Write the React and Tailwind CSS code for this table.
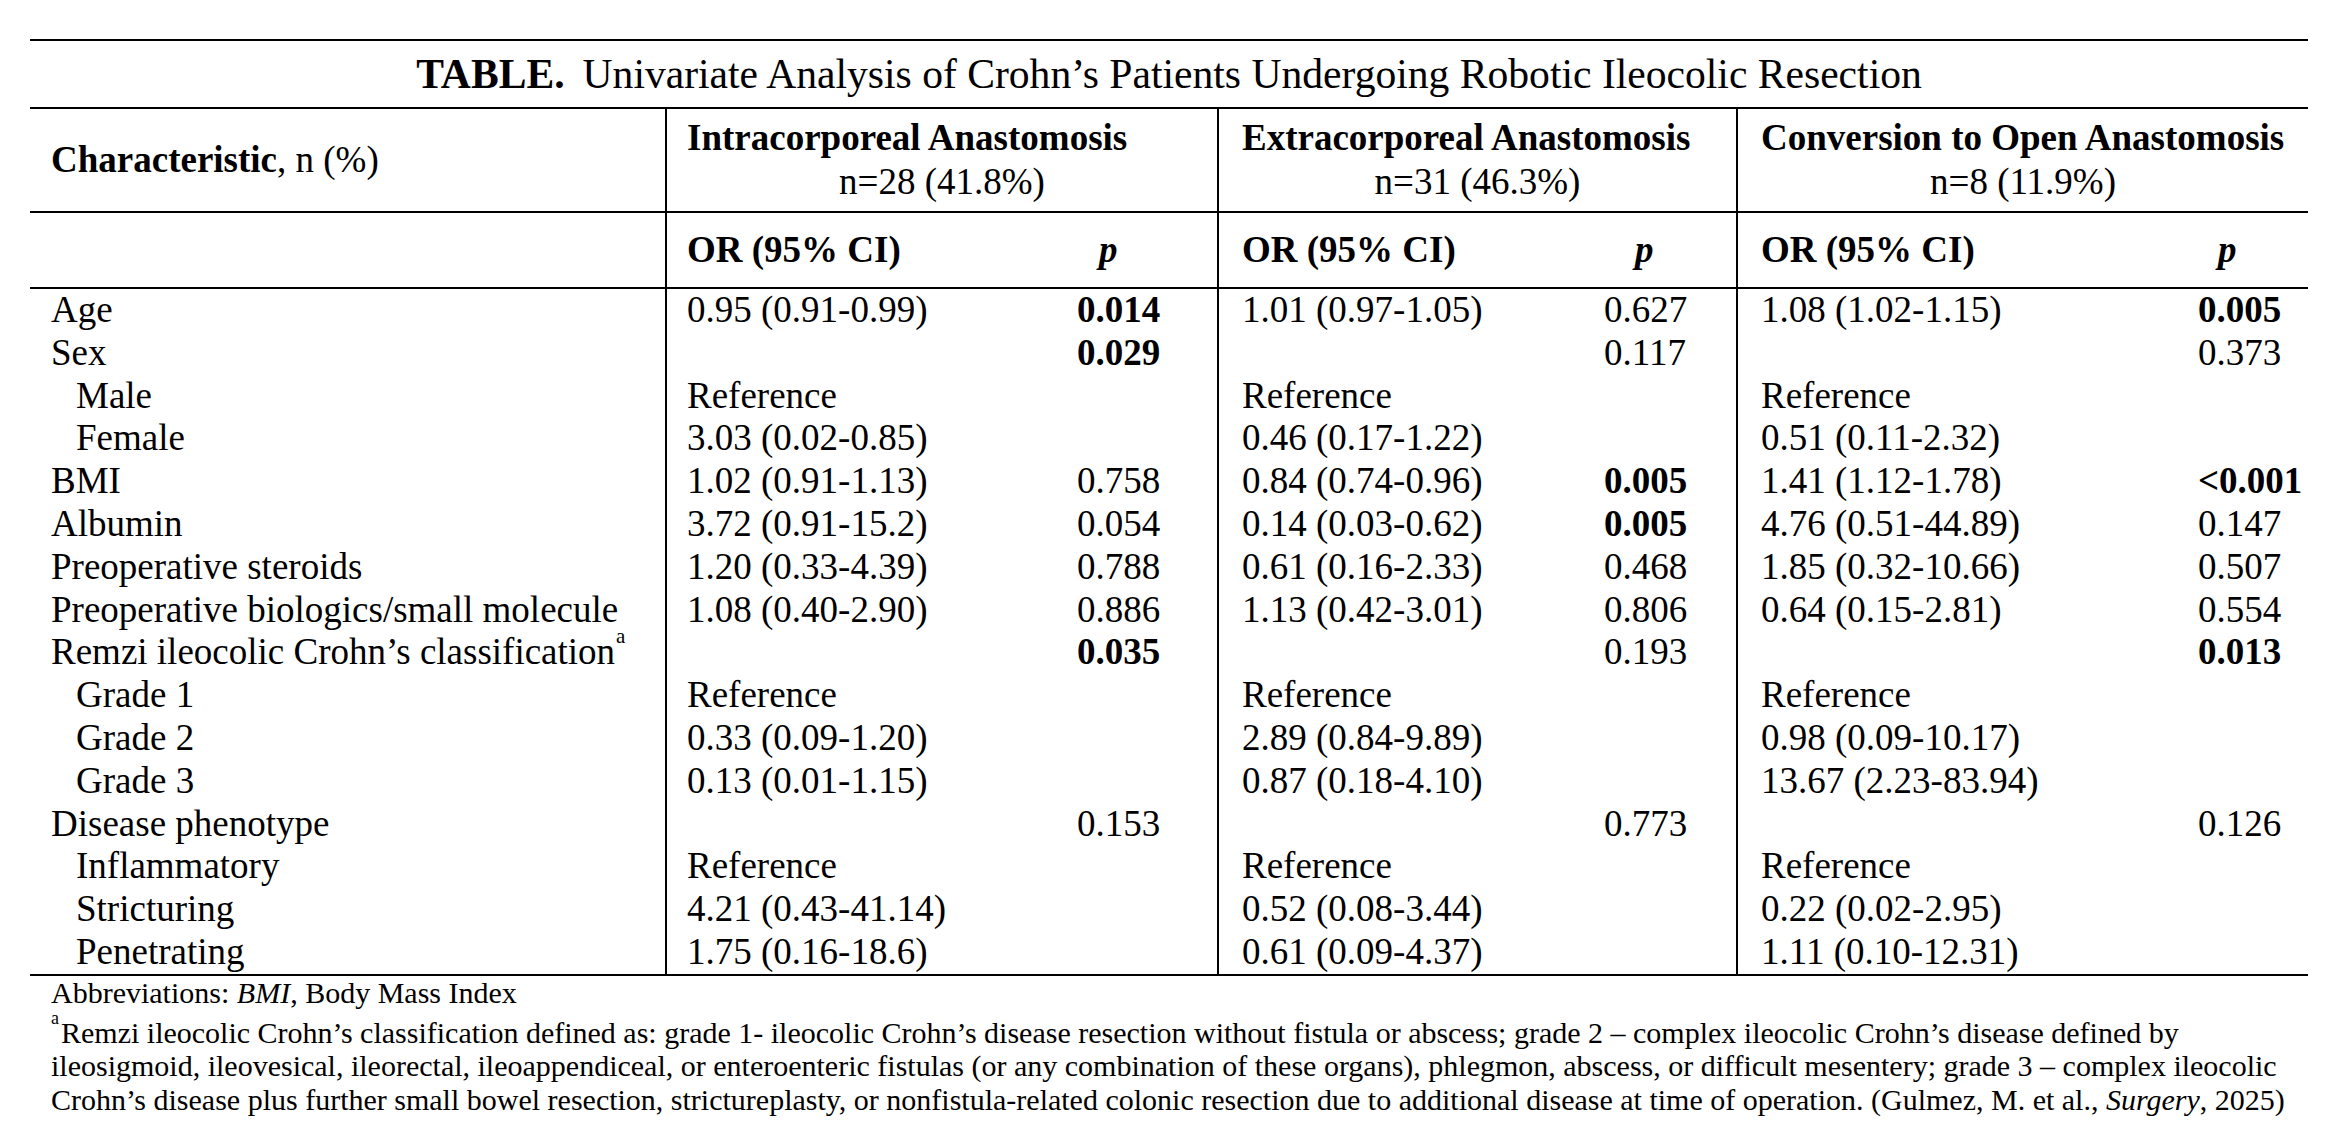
import React from "react";

const rows = [
  { label: "Age", cells: [["0.95 (0.91-0.99)", "0.014", true], ["1.01 (0.97-1.05)", "0.627"], ["1.08 (1.02-1.15)", "0.005", true]] },
  { label: "Sex", cells: [["", "0.029", true], ["", "0.117"], ["", "0.373"]] },
  { label: "Male", sub: true, cells: [["Reference", ""], ["Reference", ""], ["Reference", ""]] },
  { label: "Female", sub: true, cells: [["3.03 (0.02-0.85)", ""], ["0.46 (0.17-1.22)", ""], ["0.51 (0.11-2.32)", ""]] },
  { label: "BMI", cells: [["1.02 (0.91-1.13)", "0.758"], ["0.84 (0.74-0.96)", "0.005", true], ["1.41 (1.12-1.78)", "<0.001", true]] },
  { label: "Albumin", cells: [["3.72 (0.91-15.2)", "0.054"], ["0.14 (0.03-0.62)", "0.005", true], ["4.76 (0.51-44.89)", "0.147"]] },
  { label: "Preoperative steroids", cells: [["1.20 (0.33-4.39)", "0.788"], ["0.61 (0.16-2.33)", "0.468"], ["1.85 (0.32-10.66)", "0.507"]] },
  { label: "Preoperative biologics/small molecule", cells: [["1.08 (0.40-2.90)", "0.886"], ["1.13 (0.42-3.01)", "0.806"], ["0.64 (0.15-2.81)", "0.554"]] },
  { label: "Remzi ileocolic Crohn\u2019s classification", sup: true, cells: [["", "0.035", true], ["", "0.193"], ["", "0.013", true]] },
  { label: "Grade 1", sub: true, cells: [["Reference", ""], ["Reference", ""], ["Reference", ""]] },
  { label: "Grade 2", sub: true, cells: [["0.33 (0.09-1.20)", ""], ["2.89 (0.84-9.89)", ""], ["0.98 (0.09-10.17)", ""]] },
  { label: "Grade 3", sub: true, cells: [["0.13 (0.01-1.15)", ""], ["0.87 (0.18-4.10)", ""], ["13.67 (2.23-83.94)", ""]] },
  { label: "Disease phenotype", cells: [["", "0.153"], ["", "0.773"], ["", "0.126"]] },
  { label: "Inflammatory", sub: true, cells: [["Reference", ""], ["Reference", ""], ["Reference", ""]] },
  { label: "Stricturing", sub: true, cells: [["4.21 (0.43-41.14)", ""], ["0.52 (0.08-3.44)", ""], ["0.22 (0.02-2.95)", ""]] },
  { label: "Penetrating", sub: true, cells: [["1.75 (0.16-18.6)", ""], ["0.61 (0.09-4.37)", ""], ["1.11 (0.10-12.31)", ""]] },
];

const groups = [
  { title: "Intracorporeal Anastomosis", n: "n=28 (41.8%)" },
  { title: "Extracorporeal Anastomosis", n: "n=31 (46.3%)" },
  { title: "Conversion to Open Anastomosis", n: "n=8 (11.9%)" },
];

// left padding of the OR column inside each group
const orPad = ["pl-[20px]", "pl-[23px]", "pl-[23px]"];
const pPad = ["pl-[22px]", "pl-[31px]", "pl-[20px]"];

export default function App() {
  return (
    <div className="w-[2344px] h-[1144px] bg-white text-black font-['Liberation_Serif',serif] pt-[39px]">
      <table className="ml-[30px] w-[2278px] table-fixed border-collapse text-[37px]">
        <colgroup>
          <col className="w-[636px]" />
          <col className="w-[411px]" />
          <col className="w-[141px]" />
          <col className="w-[386px]" />
          <col className="w-[133px]" />
          <col className="w-[461px]" />
          <col className="w-[110px]" />
        </colgroup>
        <thead>
          <tr>
            <th colSpan={7} className="border-t-2 border-b-2 border-black h-[68px] font-normal text-center text-[41.6px] leading-none align-middle pt-[2px]">
              <span className="font-bold">TABLE.</span>
              <span className="ml-[18px]">Univariate Analysis of Crohn’s Patients Undergoing Robotic Ileocolic Resection</span>
            </th>
          </tr>
          <tr className="h-[104px] border-b-2 border-black">
            <th className="text-left font-normal pl-[21px] align-middle">
              <span className="font-bold">Characteristic</span>, n (%)
            </th>
            {groups.map((g, i) => (
              <th key={g.title} colSpan={2} className="border-l-2 border-black font-normal align-middle leading-[44px] p-0">
                <div className={"text-left font-bold whitespace-nowrap " + orPad[i]}>{g.title}</div>
                <div className="text-center">{g.n}</div>
              </th>
            ))}
          </tr>
          <tr className="h-[76px] border-b-2 border-black">
            <th></th>
            {groups.map((g, i) => (
              <React.Fragment key={g.title}>
                <th className={"border-l-2 border-black text-left font-bold " + orPad[i]}>OR (95% CI)</th>
                <th className={"text-left font-bold italic " + pPad[i]}>p</th>
              </React.Fragment>
            ))}
          </tr>
        </thead>
        <tbody className="leading-[42.8px]">
          {rows.map((r, ri) => (
            <tr key={r.label} className={ri === rows.length - 1 ? "border-b-2 border-black" : ""}>
              <td className={"whitespace-nowrap p-0 " + (r.sub ? "pl-[46px]" : "pl-[21px]")}>
                {r.label}
                {r.sup && <sup className="text-[21px] align-[11px] ml-[1px]">a</sup>}
              </td>
              {r.cells.map((c, ci) => (
                <React.Fragment key={ci}>
                  <td className={"border-l-2 border-black whitespace-nowrap p-0 " + orPad[ci]}>{c[0]}</td>
                  <td className={"whitespace-nowrap p-0 " + (c[2] ? "font-bold" : "")}>{c[1]}</td>
                </React.Fragment>
              ))}
            </tr>
          ))}
        </tbody>
      </table>
      <div className="ml-[51px] text-[30px] whitespace-nowrap">
        <div className="leading-[34px]">
          Abbreviations: <i>BMI</i>, Body Mass Index
        </div>
        <div className="leading-[33.5px] mt-[6px]">
          <sup className="text-[18px] align-[10px] mr-[2px]">a</sup>Remzi ileocolic Crohn’s classification defined as: grade 1- ileocolic Crohn’s disease resection without fistula or abscess; grade 2 – complex ileocolic Crohn’s disease defined by
        </div>
        <div className="leading-[33.5px]">
          ileosigmoid, ileovesical, ileorectal, ileoappendiceal, or enteroenteric fistulas (or any combination of these organs), phlegmon, abscess, or difficult mesentery; grade 3 – complex ileocolic
        </div>
        <div className="leading-[33.5px]">
          Crohn’s disease plus further small bowel resection, strictureplasty, or nonfistula-related colonic resection due to additional disease at time of operation. (Gulmez, M. et al., <i>Surgery</i>, 2025)
        </div>
      </div>
    </div>
  );
}
